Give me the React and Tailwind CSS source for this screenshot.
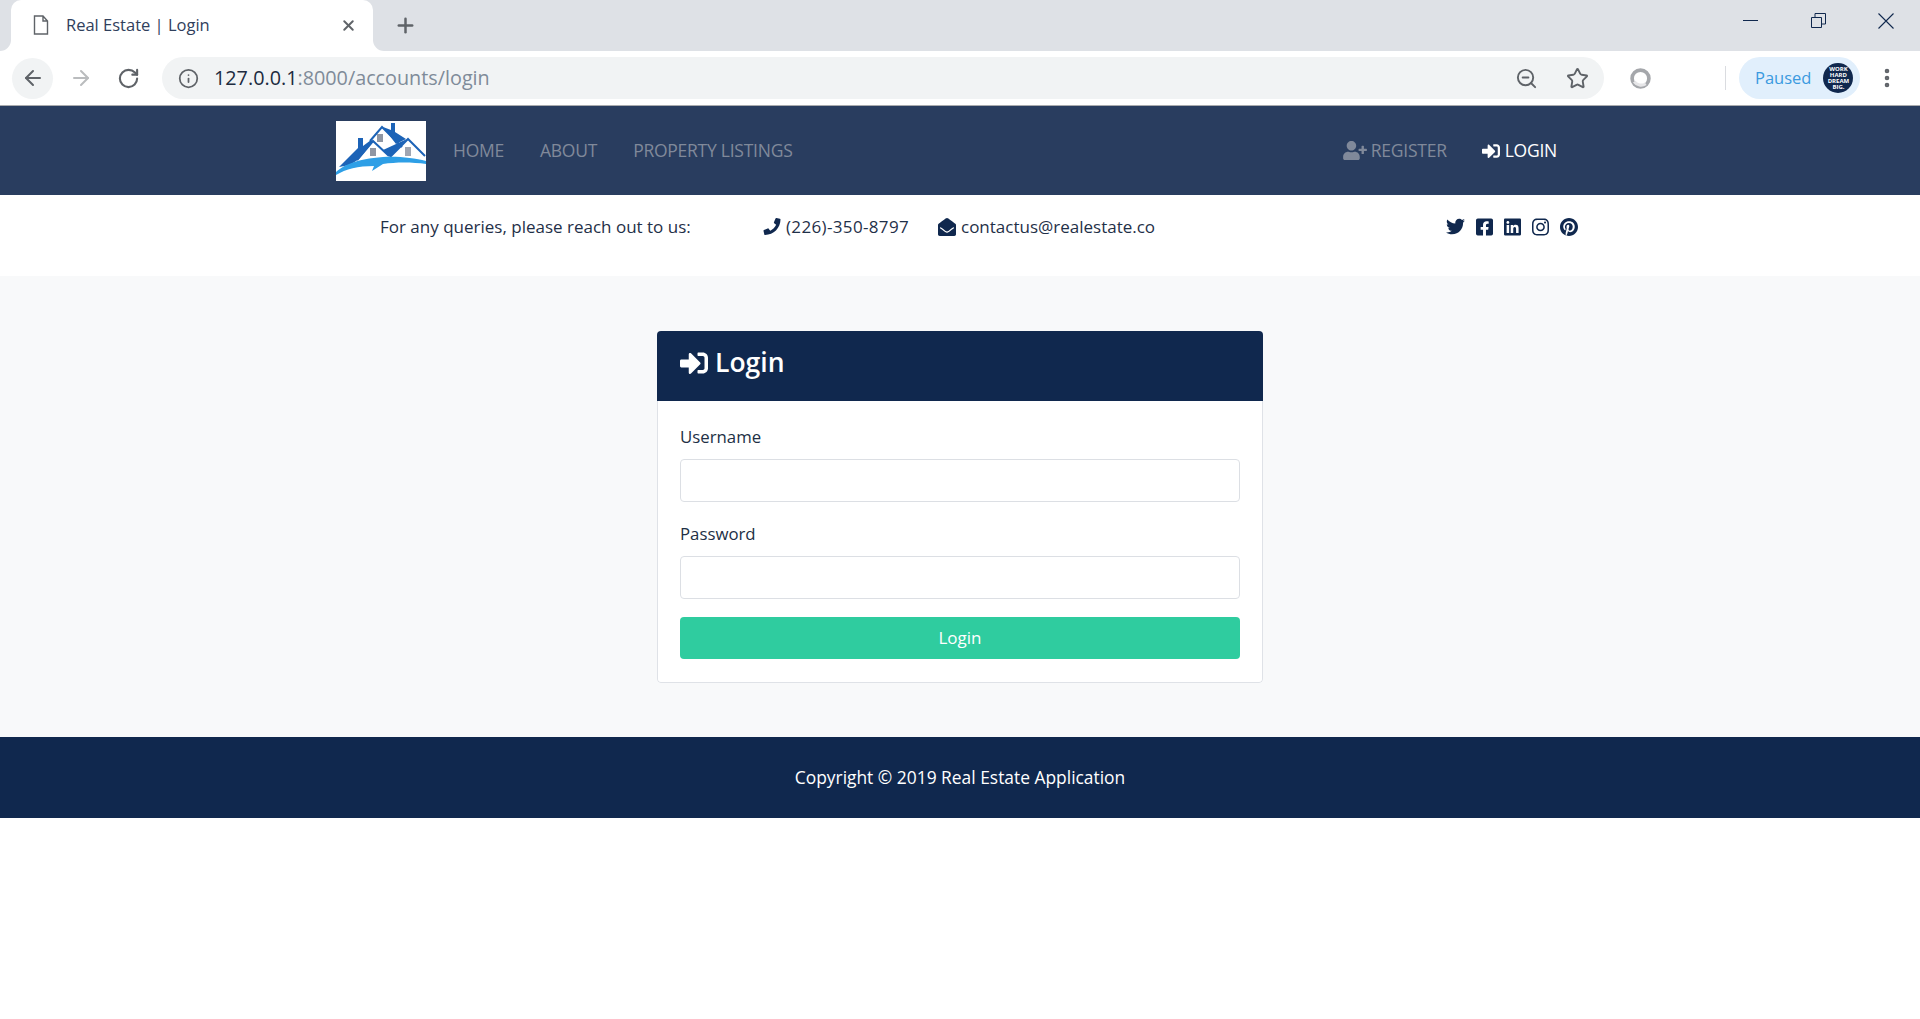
import React from 'react';
import {
  FaSignInAlt,
  FaUserPlus,
  FaPhone,
  FaEnvelopeOpen,
  FaTwitter,
  FaFacebookSquare,
  FaLinkedin,
  FaInstagram,
  FaPinterest,
} from 'react-icons/fa';
import { ArrowLeft, ArrowRight, RotateCw, Info, ZoomOut, Star, X, Plus, MoreVertical } from 'lucide-react';

const font = { fontFamily: '"Open Sans", "Noto Sans", sans-serif' };

function Logo() {
  return (
    <svg viewBox="0 0 90 60" className="w-[90px] h-[60px] bg-white shrink-0">
      {/* left roof + chimney */}
      <path d="M3 46 L22 27 V17 H27 V25 L35 19 L37 21 L23 38 L14 44 Z" fill="#1c63b7" />
      <polyline points="21,39 37,20 53,35" fill="none" stroke="#1c63b7" strokeWidth="2" />
      {/* top house */}
      <path d="M47 6 L55 9 V2 H59 V11 L70 18 L60 23 Z" fill="#1c63b7" />
      <polyline points="34,20 46,6 66,26" fill="none" stroke="#1c63b7" strokeWidth="2" />
      {/* right house */}
      <path d="M47 29 L71 18 L54 36 Z" fill="#1c63b7" />
      <polyline points="54,36 72,18 89,35" fill="none" stroke="#1c63b7" strokeWidth="2" />
      {/* windows */}
      <rect x="41" y="13" width="6" height="8" fill="#8f96a3" />
      <rect x="34" y="27" width="6" height="8" fill="#8f96a3" />
      <rect x="69" y="26" width="6" height="9" fill="#a0a6b2" />
      {/* swoosh */}
      <path d="M0 51 C8 44 20 38 47 36 C62 35 78 37 90 40 V43 C76 41 60 41 47 43 L36 50 L38 45 C22 45 10 48 0 54 Z" fill="#2e9fe6" />
    </svg>
  );
}

function WindowBar() {
  return (
    <div className="h-[51px] bg-[#dee1e6] flex items-start">
      <div className="relative ml-[11px] w-[362px] h-[51px] bg-white rounded-t-[10px] flex items-center shrink-0">
        <div className="absolute left-[-11px] bottom-0 w-[11px] h-[11px] bg-white">
          <div className="w-full h-full bg-[#dee1e6] rounded-br-[11px]" />
        </div>
        <div className="absolute right-[-11px] bottom-0 w-[11px] h-[11px] bg-white">
          <div className="w-full h-full bg-[#dee1e6] rounded-bl-[11px]" />
        </div>
        <svg viewBox="0 0 16 20" className="w-[16px] h-[20px] ml-[22px] mt-[-1px]" fill="none" stroke="#5f6368" strokeWidth="1.4">
          <path d="M1.5 1 H10 L14.5 6 V19 H1.5 Z M10 1 V6 H14.5" />
        </svg>
        <span className="ml-[17px] text-[16.5px] text-[#30405c]">Real Estate | Login</span>
        <X className="ml-auto mr-[16px] w-[17px] h-[17px] text-[#5f6368]" strokeWidth={2.8} />
      </div>
      <Plus className="ml-[21px] mt-[14px] w-[23px] h-[23px] text-[#5f6368]" strokeWidth={2.6} />
      <div className="ml-auto flex items-start text-[#10284e]">
        <div className="w-[68px] h-[41px] flex items-center justify-center">
          <div className="w-[15px] h-px bg-[#10284e]" />
        </div>
        <div className="w-[68px] h-[41px] flex items-center justify-center">
          <svg viewBox="0 0 15 15" className="w-[15px] h-[15px]" fill="none" stroke="#10284e" strokeWidth="1">
            <path d="M0.5 4.5 H10.5 V14.5 H0.5 Z M4 4.5 V0.5 H14.5 V11 H10.5" />
          </svg>
        </div>
        <div className="w-[68px] h-[41px] flex items-center justify-center">
          <svg viewBox="0 0 16 16" className="w-[16px] h-[16px]" fill="none" stroke="#10284e" strokeWidth="1.1">
            <path d="M0.5 0.5 L15.5 15.5 M15.5 0.5 L0.5 15.5" />
          </svg>
        </div>
      </div>
    </div>
  );
}

function Toolbar() {
  return (
    <div className="h-[55px] bg-white flex items-center border-b border-[#a9abae]">
      <div className="ml-[12px] w-[41px] h-[41px] rounded-full bg-[#f1f3f4] flex items-center justify-center shrink-0">
        <ArrowLeft className="w-[24px] h-[24px] text-[#5f6368]" strokeWidth={2} />
      </div>
      <ArrowRight className="ml-[16px] w-[24px] h-[24px] text-[#babcbe]" strokeWidth={2} />
      <RotateCw className="ml-[24px] w-[23px] h-[23px] text-[#5f6368]" strokeWidth={2.2} />
      <div className="ml-[22px] w-[1442px] h-[42px] rounded-full bg-[#f1f3f4] flex items-center shrink-0">
        <Info className="ml-[16px] w-[21px] h-[21px] text-[#5f6368]" strokeWidth={2} />
        <span className="ml-[15px] text-[19.8px] text-[#202b3f]">
          127.0.0.1<span className="text-[#7f8b99]">:8000/accounts/login</span>
        </span>
        <ZoomOut className="ml-auto w-[23px] h-[23px] text-[#5f6368]" strokeWidth={2} />
        <Star className="ml-[28px] mr-[15px] w-[23px] h-[23px] text-[#5f6368]" strokeWidth={2} />
      </div>
      <svg viewBox="0 0 20 20" className="ml-[26px] w-[21px] h-[21px] shrink-0">
        <circle cx="10" cy="10" r="8" fill="none" stroke="#a5a7ab" strokeWidth="3.5" />
        <path d="M4 13 A8 8 0 0 0 15 15" fill="none" stroke="#e6e6e8" strokeWidth="3" />
      </svg>
      <div className="ml-[74px] w-px h-[24px] bg-[#dadce0]" />
      <div className="ml-[13px] w-[121px] h-[42px] rounded-full bg-[#e1effc] flex items-center shrink-0">
        <span className="ml-[16px] text-[16.5px] text-[#3a9ae0]">Paused</span>
        <div className="ml-[12px] w-[30px] h-[30px] rounded-full bg-[#10284e] flex flex-col items-center justify-center text-white font-bold text-[6px] leading-[6px] overflow-hidden">
          <span>WORK</span>
          <span>HARD</span>
          <span>DREAM</span>
          <span>BIG.</span>
        </div>
      </div>
      <MoreVertical className="ml-[15px] w-[24px] h-[24px] text-[#5f6368]" strokeWidth={2.6} />
    </div>
  );
}

function Navbar() {
  return (
    <nav className="h-[89px] bg-[#293d5f] flex items-center pl-[336px] pr-[363px] text-[17.5px] tracking-[-0.25px]">
      <Logo />
      <a className="ml-[27px] text-[#80899a]">HOME</a>
      <a className="ml-[36px] text-[#80899a]">ABOUT</a>
      <a className="ml-[36px] text-[#80899a]">PROPERTY LISTINGS</a>
      <a className="ml-auto flex items-center gap-[4px] text-[#80899a]">
        <FaUserPlus className="w-[24px] h-[19px]" />
        REGISTER
      </a>
      <a className="ml-[34px] flex items-center gap-[4px] text-white">
        <FaSignInAlt className="w-[20px] h-[18px]" />
        LOGIN
      </a>
    </nav>
  );
}

function InfoBar() {
  return (
    <div className="h-[81px] bg-white flex pt-[20px] pl-[380px] text-[17px] text-[#1f3048] leading-[23px]">
      <span className="w-[383px] shrink-0">For any queries, please reach out to us:</span>
      <span className="w-[175px] shrink-0 flex items-center gap-[5px] h-[23px] tracking-[0.35px]">
        <FaPhone className="w-[18px] h-[17px] text-[#10284e]" />
        (226)-350-8797
      </span>
      <span className="w-[508px] shrink-0 flex items-center gap-[5px] h-[23px]">
        <FaEnvelopeOpen className="w-[18px] h-[18px] text-[#10284e]" />
        contactus@realestate.co
      </span>
      <div className="flex items-center gap-[11px] h-[23px] text-[#10284e]">
        <FaTwitter className="w-[19px] h-[19px]" />
        <FaFacebookSquare className="w-[17px] h-[20px]" />
        <FaLinkedin className="w-[17px] h-[20px]" />
        <FaInstagram className="w-[17px] h-[20px]" />
        <FaPinterest className="w-[18px] h-[20px]" />
      </div>
    </div>
  );
}

function Field({ label, className }) {
  return (
    <div className={className}>
      <label className="block mb-[10px] text-[16.8px] leading-[24px] text-[#212f45]">{label}</label>
      <input className="block w-full h-[43px] bg-white border border-[#dcdfe4] rounded-[4px]" />
    </div>
  );
}

function LoginCard() {
  return (
    <div className="w-[606px] rounded-[4px] overflow-hidden bg-white">
      <div className="h-[70px] bg-[#10284e] text-white flex items-center pl-[23px] pb-[7px] gap-[7px]">
        <FaSignInAlt className="w-[28px] h-[28px]" />
        <span className="text-[26.5px] font-semibold">Login</span>
      </div>
      <div className="px-[22px] pt-[24px] pb-[23px] border-x border-b border-[#dfe2e7] rounded-b-[4px]">
        <Field label="Username" className="mb-[20px]" />
        <Field label="Password" className="mb-[18px]" />
        <button className="block w-full h-[42px] rounded-[4px] bg-[#2fcc9f] text-white text-[17px]">Login</button>
      </div>
    </div>
  );
}

export default function App() {
  return (
    <div className="min-h-[1019px] bg-white" style={font}>
      <WindowBar />
      <Toolbar />
      <Navbar />
      <InfoBar />
      <main className="h-[461px] bg-[#f8f9fa] flex justify-center items-start pt-[55px]">
        <LoginCard />
      </main>
      <footer className="h-[81px] bg-[#10284e] text-white text-[17.4px] flex items-center justify-center">
        Copyright © 2019 Real Estate Application
      </footer>
    </div>
  );
}
